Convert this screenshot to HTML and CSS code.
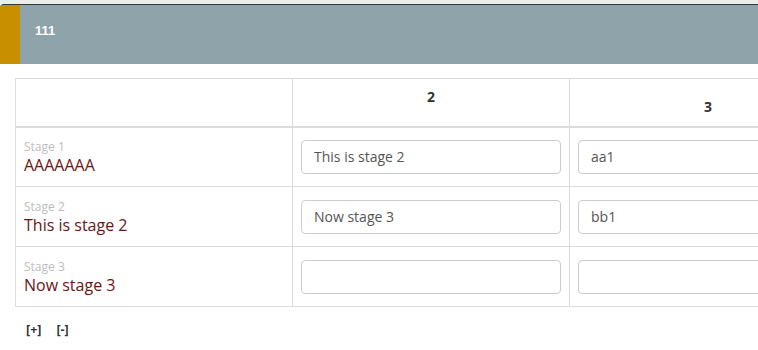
FILE: index.html
```html
<!DOCTYPE html>
<html lang="en">
<head>
  <meta charset="UTF-8" />
  <title>Stages</title>
  <link rel="stylesheet" href="styles.css">
</head>
<body>

  <div class="top-strip"></div>

  <header class="panel-head">
    <div class="panel-mark"></div>
    <h1 class="panel-title">111</h1>
  </header>

  <main class="grid-wrap">
    <table class="stage-table">
      <thead>
        <tr>
          <th></th>
          <th>2</th>
          <th class="head-low">3</th>
        </tr>
      </thead>
      <tbody>
        <tr>
          <td class="stage-cell">
            <div class="stage-label">Stage 1</div>
            <div class="stage-name">AAAAAAA</div>
          </td>
          <td><input class="stage-input" type="text" value="This is stage 2"></td>
          <td><input class="stage-input" type="text" value="aa1"></td>
        </tr>
        <tr>
          <td class="stage-cell">
            <div class="stage-label">Stage 2</div>
            <div class="stage-name">This is stage 2</div>
          </td>
          <td><input class="stage-input" type="text" value="Now stage 3"></td>
          <td><input class="stage-input" type="text" value="bb1"></td>
        </tr>
        <tr>
          <td class="stage-cell">
            <div class="stage-label">Stage 3</div>
            <div class="stage-name">Now stage 3</div>
          </td>
          <td><input class="stage-input" type="text" value=""></td>
          <td><input class="stage-input" type="text" value=""></td>
        </tr>
      </tbody>
    </table>

    <!-- adicionar / remover linha -->
    <div class="row-actions">
      <a href="#">[+]</a>
      <a href="#">[-]</a>
    </div>
  </main>

</body>
</html>
```

FILE: styles.css
```css
/* RESET */
* {
  margin: 0;
  padding: 0;
  box-sizing: border-box;
}

html, body {
  overflow: hidden;
}

body {
  font-family: "Open Sans", Arial, sans-serif;
  background: #fff;
  color: #333;
  width: 758px;
}

.top-strip {
  height: 4px;
  background: #ececec;
}

.panel-head {
  display: flex;
  height: 60px;
  background-color: #8fa3ab;
  border-top: 1px solid #2e3b42;
  border-top-left-radius: 4px;
  overflow: hidden;
}

.panel-mark {
  width: 20px;
  background-color: #c88f00;
}

.panel-title {
  font-family: "Liberation Sans", Arial, sans-serif;
  font-size: 13px;
  font-weight: bold;
  color: #fff;
  padding: 18px 0 0 15px;
}

.grid-wrap {
  padding: 14px 0 0 15px;
  overflow: hidden;
}

.stage-table {
  border-collapse: collapse;
  table-layout: fixed;
  width: 831px;
}

.stage-table th,
.stage-table td {
  width: 277px;
  border: 1px solid #dcdcdc;
}

.stage-table th {
  height: 48px;
  border-bottom: 2px solid #dcdcdc;
  font-size: 14px;
  font-weight: bold;
  color: #333;
  vertical-align: top;
  padding-top: 8px;
}

.stage-table th.head-low {
  padding-top: 18px;
}

.stage-table td {
  height: 60px;
  padding: 0 8px;
  vertical-align: middle;
}

.stage-cell {
  padding-left: 9px;
}

.stage-label {
  font-size: 12px;
  line-height: 16px;
  color: #bdbdbd;
}

.stage-name {
  font-size: 16px;
  line-height: 20px;
  color: #6b1515;
}

.stage-input {
  display: block;
  width: 100%;
  height: 34px;
  padding: 0 12px;
  border: 1px solid #ccc;
  border-radius: 4px;
  font-family: "Open Sans", Arial, sans-serif;
  font-size: 14px;
  color: #555;
  background: #fff;
}

.row-actions {
  padding: 14px 0 0 11px;
  display: flex;
  gap: 15px;
}

.row-actions a {
  font-size: 12.5px;
  font-weight: bold;
  color: #333;
  text-decoration: none;
}
```
